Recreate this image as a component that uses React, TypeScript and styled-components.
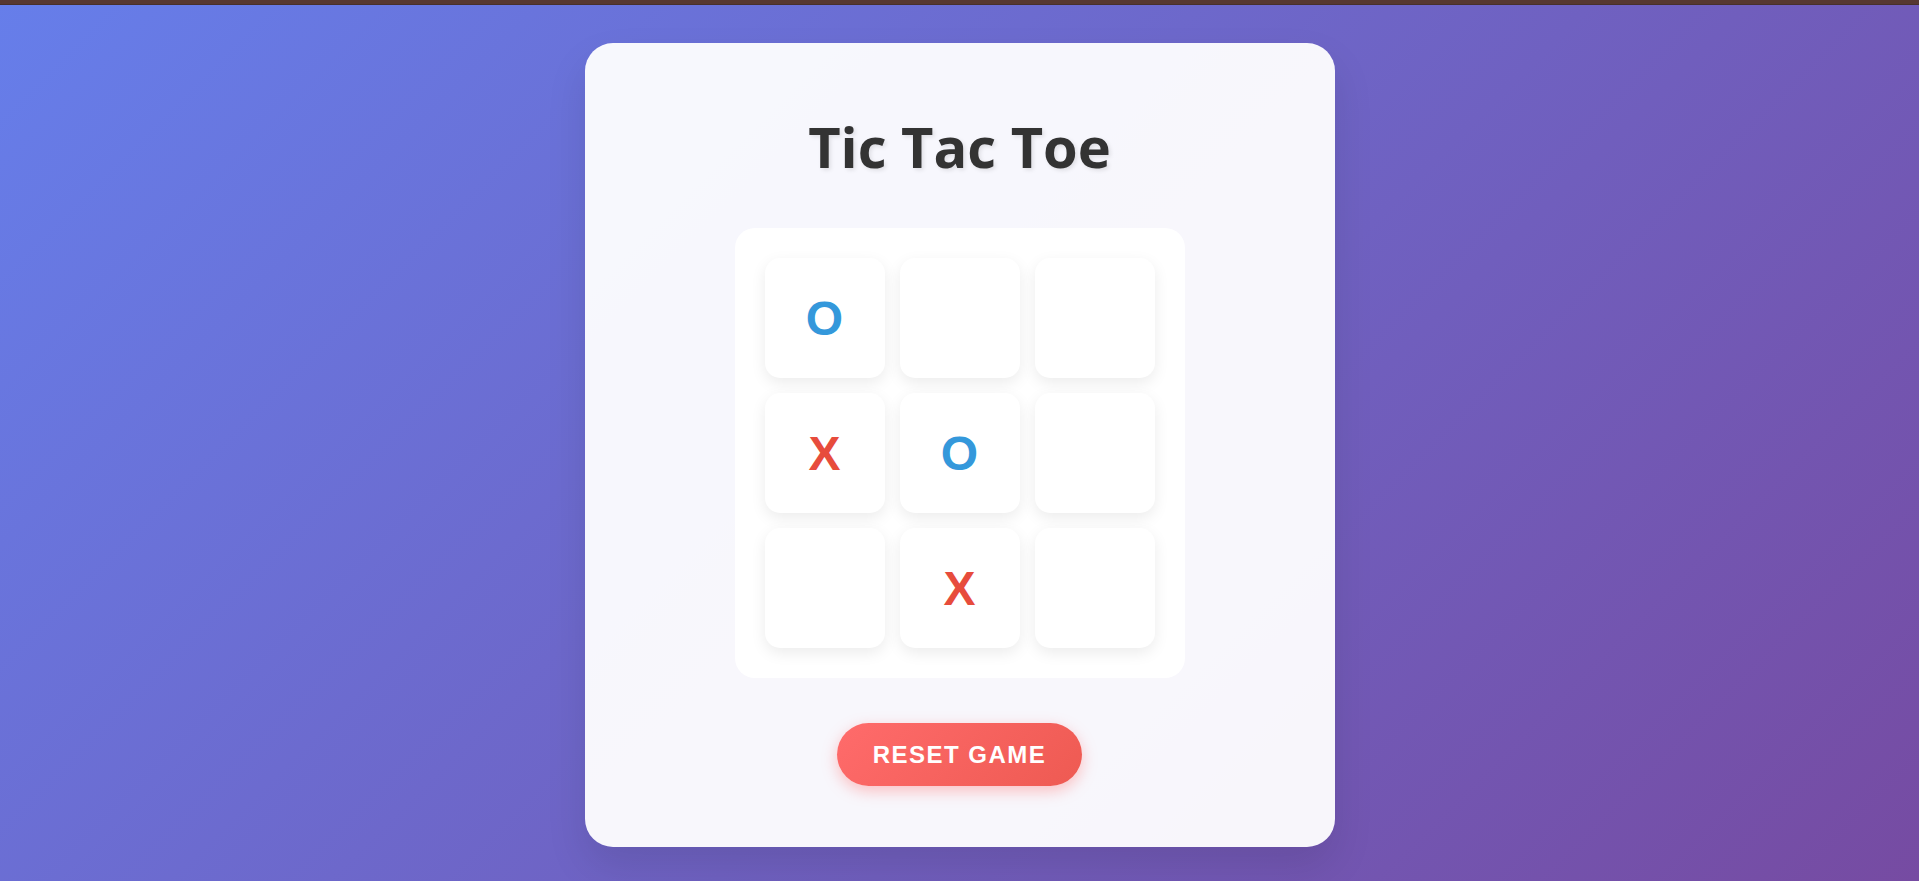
import React, { FC } from "react";
import styled, { createGlobalStyle } from "styled-components";

type Mark = "X" | "O" | "";

const board: Mark[] = ["O", "", "", "X", "O", "", "", "X", ""];

const GlobalStyle = createGlobalStyle`
  html, body {
    margin: 0;
    padding: 0;
  }

  body {
    min-height: 100vh;
    font-family: "Open Sans", "Noto Sans", sans-serif;
    background: linear-gradient(135deg, #667eea 0%, #764ba2 100%);
    background-attachment: fixed;
  }
`;

const App: FC = () => {
  return (
    <>
      <GlobalStyle />
      <TopBar />
      <Main>
        <Card>
          <Title>Tic Tac Toe</Title>
          <Board>
            {board.map((mark, i) => (
              <Cell key={i} $mark={mark}>
                {mark}
              </Cell>
            ))}
          </Board>
          <ResetButton>Reset Game</ResetButton>
        </Card>
      </Main>
    </>
  );
};

export default App;

const TopBar = styled.div`
  height: 4px;
  background: #573831;
  border-bottom: 1px solid #48302b;
`;

const Main = styled.main`
  display: flex;
  justify-content: center;
  padding-top: 38px;
`;

const Card = styled.div`
  width: 750px;
  box-sizing: border-box;
  padding: 70px 40px 61px;
  display: flex;
  flex-direction: column;
  align-items: center;
  background: rgba(255, 255, 255, 0.95);
  border-radius: 28px;
  box-shadow: 0 20px 40px rgba(0, 0, 0, 0.1);
`;

const Title = styled.h1`
  margin: 0 0 48px;
  font-size: 56px;
  line-height: 67px;
  font-weight: 700;
  color: #333333;
  text-shadow: 2px 2px 4px rgba(0, 0, 0, 0.1);
`;

const Board = styled.div`
  display: grid;
  grid-template-columns: repeat(3, 120px);
  grid-auto-rows: 120px;
  gap: 15px;
  padding: 30px;
  background: #ffffff;
  border-radius: 20px;
`;

const Cell = styled.button<{ $mark: Mark }>`
  border: none;
  border-radius: 15px;
  background: #ffffff;
  box-shadow: 0 5px 15px rgba(0, 0, 0, 0.08);
  font-family: "Liberation Sans", Arial, sans-serif;
  font-size: 48px;
  font-weight: 700;
  color: ${(p) => (p.$mark === "X" ? "#e74c3c" : "#3498db")};
  cursor: pointer;
  padding: 0;
`;

const ResetButton = styled.button`
  margin-top: 45px;
  padding: 18px 36px;
  border: none;
  border-radius: 50px;
  background: linear-gradient(135deg, #ff6b6b 0%, #ee5a52 100%);
  box-shadow: 0 5px 15px rgba(255, 107, 107, 0.4);
  color: #ffffff;
  font-family: "Liberation Sans", Arial, sans-serif;
  font-size: 24px;
  line-height: 27px;
  font-weight: 700;
  letter-spacing: 1.5px;
  text-transform: uppercase;
  cursor: pointer;
`;
